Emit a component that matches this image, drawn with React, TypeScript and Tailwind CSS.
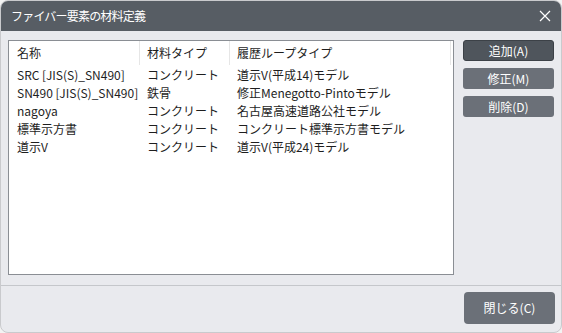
import React from "react";

const rows = [
  ["SRC [JIS(S)_SN490]", "コンクリート", "道示V(平成14)モデル"],
  ["SN490 [JIS(S)_SN490]", "鉄骨", "修正Menegotto-Pintoモデル"],
  ["nagoya", "コンクリート", "名古屋高速道路公社モデル"],
  ["標準示方書", "コンクリート", "コンクリート標準示方書モデル"],
  ["道示V", "コンクリート", "道示V(平成24)モデル"],
];

export default function App() {
  return (
    <div
      className="w-[562px] h-[333px] bg-[#f3f3f3]"
      style={{ fontFamily: '"Noto Sans CJK JP", "Liberation Sans", sans-serif' }}
    >
      <div className="w-full h-full flex flex-col bg-[#e9eaee] rounded-[8px] overflow-hidden border border-[#c9cacd]">
        <div className="h-[30px] shrink-0 bg-[#575d64] flex items-center justify-between pl-[10px] pr-[10px]">
          <span className="text-[12px] tracking-[-0.8px] text-white leading-none">ファイバー要素の材料定義</span>
          <svg width="12" height="12" viewBox="0 0 12 12" className="text-white">
            <path d="M1 1L11 11M11 1L1 11" stroke="currentColor" strokeWidth="1.2" />
          </svg>
        </div>
        <div className="flex pt-[9px] pl-[7px] pr-[7px] h-[244px] shrink-0">
          <div className="w-[446px] h-[235px] bg-white border border-[#8a8e94] text-[12px] text-[#1e1e1e] leading-none">
            <div className="flex h-[24px] items-center">
              <div className="w-[131px] pl-[8px] h-full flex items-center border-r border-[#e6e6e6]">名称</div>
              <div className="w-[90px] pl-[7px] h-full flex items-center border-r border-[#e6e6e6]">材料タイプ</div>
              <div className="w-[221px] pl-[7px] h-full flex items-center border-r border-[#e6e6e6]">履歴ループタイプ</div>
            </div>
            <div className="flex flex-col pt-[1px]">
              {rows.map((r, i) => (
                <div key={i} className="flex h-[18px] items-center">
                  <div className="w-[131px] pl-[8px] whitespace-nowrap">{r[0]}</div>
                  <div className="w-[90px] pl-[7px] whitespace-nowrap">{r[1]}</div>
                  <div className="w-[221px] pl-[7px] whitespace-nowrap">{r[2]}</div>
                </div>
              ))}
            </div>
          </div>
          <div className="ml-[9px] flex flex-col gap-[7px]">
            <button className="w-[91px] h-[21px] rounded-[3px] bg-[#4f555c] border border-[#3c4147] text-white text-[12px] leading-none flex items-center justify-center">
              追加(A)
            </button>
            <button className="w-[91px] h-[21px] rounded-[3px] bg-[#6b7078] text-white text-[12px] leading-none flex items-center justify-center">
              修正(M)
            </button>
            <button className="w-[91px] h-[21px] rounded-[3px] bg-[#6b7078] text-white text-[12px] leading-none flex items-center justify-center">
              削除(D)
            </button>
          </div>
        </div>
        <div className="h-px bg-[#c5c7cb] mt-[10px]" />
        <div className="flex justify-end pr-[6px] pt-[6px]">
          <button className="w-[91px] h-[32px] rounded-[4px] bg-[#6b7078] text-white text-[12px] leading-none flex items-center justify-center">
            閉じる(C)
          </button>
        </div>
      </div>
    </div>
  );
}
